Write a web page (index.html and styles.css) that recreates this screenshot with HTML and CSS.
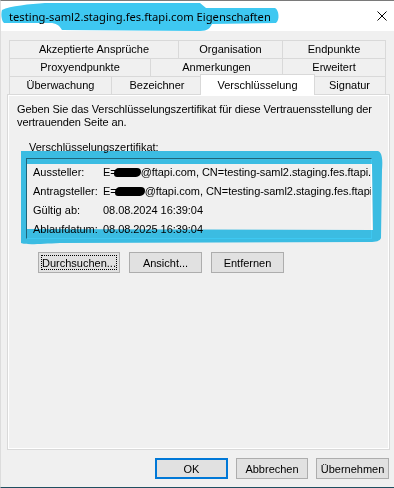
FILE: index.html
```html
<!DOCTYPE html>
<html lang="de">
<head>
<meta charset="utf-8">
<title>Eigenschaften</title>
<link rel="stylesheet" href="styles.css">
</head>
<body>
<div class="window">
  <div class="titlebar">
    <span class="title">testing-saml2.staging.fes.ftapi.com Eigenschaften</span>
    <svg class="close" width="10" height="10" viewBox="0 0 10 10"><path d="M0.5 0.5 L9.5 9.5 M9.5 0.5 L0.5 9.5" stroke="#000" stroke-width="1" fill="none"/></svg>
  </div>
  <div class="client">
    <div class="tabs">
      <div class="tabrow">
        <div class="tab w169">Akzeptierte Ansprüche</div>
        <div class="tab w104">Organisation</div>
        <div class="tab w104 last">Endpunkte</div>
      </div>
      <div class="tabrow">
        <div class="tab w141">Proxyendpunkte</div>
        <div class="tab w132">Anmerkungen</div>
        <div class="tab w104 last">Erweitert</div>
      </div>
      <div class="tabrow">
        <div class="tab w102">Überwachung</div>
        <div class="tab w91">Bezeichner</div>
        <div class="tab w111 selected">Verschlüsselung</div>
        <div class="tab w73 last">Signatur</div>
      </div>
    </div>
    <div class="panel">
      <p class="desc">Geben Sie das Verschlüsselungszertifikat für diese Vertrauensstellung der vertrauenden Seite an.</p>
      <div class="grouplabel">Verschlüsselungszertifikat:</div>
      <div class="certbox">
        <div class="cert-grid">
          <span class="lbl">Aussteller:</span>
          <span class="val">E=<span class="blob b1"></span>@ftapi.com, CN=testing-saml2.staging.fes.ftapi.com</span>
          <span class="lbl">Antragsteller:</span>
          <span class="val">E=<span class="blob b2"></span>@ftapi.com, CN=testing-saml2.staging.fes.ftapi.com</span>
          <span class="lbl">Gültig ab:</span>
          <span class="val">08.08.2024 16:39:04</span>
          <span class="lbl">Ablaufdatum:</span>
          <span class="val">08.08.2025 16:39:04</span>
        </div>
      </div>
      <div class="btnrow">
        <button class="btn focused w82">Durchsuchen...</button>
        <button class="btn w73">Ansicht...</button>
        <button class="btn w73">Entfernen</button>
      </div>
    </div>
    <div class="footer">
      <button class="btn default w73">OK</button>
      <button class="btn w72">Abbrechen</button>
      <button class="btn w73">Übernehmen</button>
    </div>
  </div>
</div>
<svg class="marks" width="394" height="488" viewBox="0 0 394 488">
  <path class="hl" d="M2,10 C10,6 30,4 45,3 L200,3 L206,8 L275,8 C279,10 280,20 276,23 L212,24 C210,28 208,31 200,31 L62,30 C59,25 56,23 50,23 L4,23 C1,20 1,13 2,10 Z"/>
  <path class="hl" d="M207,83 L219,81 L221,74 L293,73 C298,74 299,88 296,90 L210,91 C207,90 206,85 207,83 Z"/>
  <path class="hl" fill-rule="evenodd" d="M21,151 L378,151 C382,152 383,160 382,170 L381,238 C380,241 376,242 370,242 L60,243 C40,244 25,245 21,243 Z M27,164 L372,164 L373,230 L27,229 Z"/>
</svg>
</body>
</html>
```
FILE: styles.css
```css
* { box-sizing: border-box; }
html, body { margin: 0; padding: 0; }
body {
  position: relative;
  width: 394px;
  height: 488px;
  overflow: hidden;
  background: #f0f0f0;
  font-family: "Liberation Sans", Arial, sans-serif;
  font-size: 11px;
  color: #000;
}
.window {
  width: 394px;
  height: 488px;
  display: flex;
  flex-direction: column;
  background: #f0f0f0;
  border-top: 1px solid #7a7a7a;
  border-left: 1px solid #dcdcdc;
  border-bottom: 1px solid #1f4f60;
}
.titlebar {
  height: 30px;
  flex: none;
  background: #fff;
  display: flex;
  align-items: center;
  justify-content: space-between;
  padding: 0 7px 0 8px;
}
.title {
  font-family: "Noto Sans", "Open Sans", sans-serif;
  font-size: 11.2px;
  color: #000;
}
.close { display: block; }
.client {
  flex: 1;
  display: flex;
  flex-direction: column;
}
.tabs {
  position: relative;
  z-index: 1;
  margin: 9px 0 0 8px;
  width: 377px;
}
.tabrow {
  display: flex;
  height: 18px;
  align-items: flex-start;
}
.tab {
  height: 18px;
  line-height: 17px;
  text-align: center;
  white-space: nowrap;
  border-top: 1px solid #d9d9d9;
  border-left: 1px solid #d9d9d9;
  background: #f0f0f0;
}
.tab.last { border-right: 1px solid #d9d9d9; }
.tab.selected {
  position: relative;
  z-index: 2;
  width: 115px;
  height: 21px;
  margin: -2px -2px 0 -2px;
  line-height: 21px;
  background: #fff;
  border-right: 1px solid #d9d9d9;
}
.w169 { width: 169px; }
.w141 { width: 141px; }
.w132 { width: 132px; }
.w111 { width: 111px; }
.w104 { width: 104px; }
.w102 { width: 102px; }
.w91 { width: 91px; }
.w82 { width: 82px; }
.w73 { width: 73px; }
.w72 { width: 72px; }
.panel {
  margin-left: 6px;
  width: 383px;
  height: 356px;
  border: 1px solid #d9d9d9;
  box-shadow: inset 0 0 0 1px #fff;
  padding: 8px 0 0 9px;
  display: flex;
  flex-direction: column;
}
.desc {
  margin: 0;
  width: 362px;
  line-height: 13px;
  letter-spacing: -0.08px;
}
.grouplabel {
  margin: 12px 0 0 12px;
  line-height: 13px;
}
.certbox {
  margin: 4px 0 0 9px;
  width: 346px;
  height: 81px;
  border-top: 1px solid #808080;
  border-left: 1px solid #808080;
  border-bottom: 1px solid #fff;
  border-right: 1px solid #fff;
  overflow: hidden;
  padding: 3px 0 0 6px;
}
.cert-grid {
  display: grid;
  grid-template-columns: 70px 1fr;
  grid-auto-rows: 19px;
  align-items: center;
  white-space: nowrap;
}
.val { overflow: hidden; letter-spacing: -0.05px; }
.blob {
  display: inline-block;
  height: 9px;
  background: #000;
  border-radius: 5px 4px 5px 3px;
  vertical-align: -1px;
}
.b1 { width: 27px; margin-left: -3px; }
.b2 { width: 30px; margin-left: -2px; }
.btnrow {
  display: flex;
  gap: 9px;
  margin: 13px 0 0 21px;
}
.btn {
  position: relative;
  height: 21px;
  padding: 0;
  font-family: "Liberation Sans", Arial, sans-serif;
  font-size: 11px;
  color: #000;
  background: #e1e1e1;
  border: 1px solid #adadad;
  border-radius: 0;
}
.btn.focused::after {
  content: "";
  position: absolute;
  inset: 2px;
  border: 1px dotted #000;
}
.btn.default { border: 2px solid #0078d7; }
.footer {
  display: flex;
  justify-content: flex-end;
  gap: 8px;
  margin-top: 8px;
  padding-right: 5px;
}
.marks {
  position: absolute;
  left: 0;
  top: 0;
  pointer-events: none;
  mix-blend-mode: multiply;
}
.hl { fill: #3ec8f1; }
```
